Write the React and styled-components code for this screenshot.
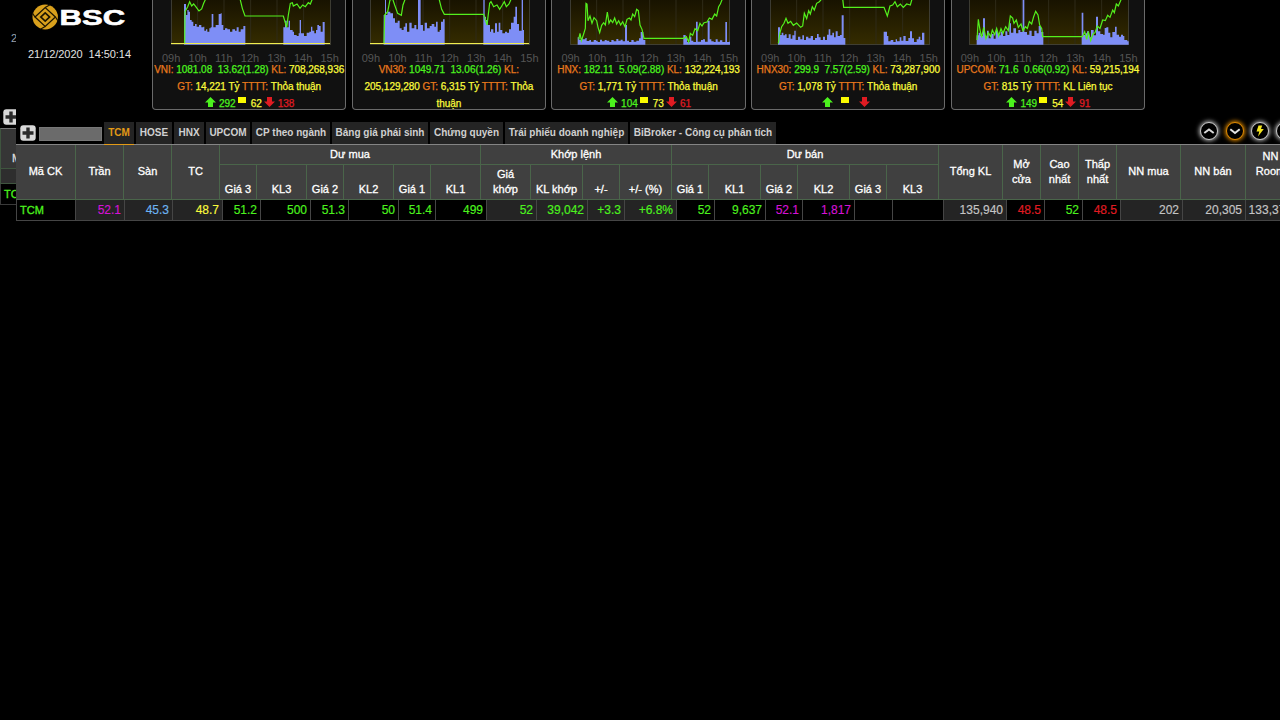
import React from 'react';
import styled, { createGlobalStyle } from 'styled-components';

const GREEN = '#4cf21e';
const YELLOW = '#fbfb3c';
const ORANGE = '#e8791c';
const RED = '#e01b22';
const PURPLE = '#d512d5';
const BLUE = '#6db4f2';
const GREY = '#c4c4c4';

// vol: [x, top] steps of the volume area, price: points of the index line
const markets = [
    {
        lines: [
            [['VNI: ', 'o'], ['1081.08  13.62(1.28)', 'g'], [' KL: ', 'o'], ['708,268,936', 'y']],
            [['GT: ', 'o'], ['14,221 Tỷ', 'y'], [' TTTT: ', 'o'], ['Thỏa thuận', 'y']],
        ],
        counts: ['292', '62', '138'],
        base: true,
        vol: [
            '39:12 45:45 49:30 53:35 57:60 62:65 67:78 72:72 77:80 84:75 91:82 97:80 100:92 105:88 109:95 115:85 119:82 122:42 127:82 134:75 143:42 149:40 152:75 157:90 162:85 169:88 177:95 184:88 192:92 197:82 203:95 209:88 217:78 223',
            '337:82 342:62 347:82 353:62 357:90 365:95 369:105 377:108 383:100 386:60 390:100 399:108 407:98 415:95 420:80 424:92 430:100 435:90 439:75 444:78 449:95 455:66 461',
        ],
        price: '41,130 42,35 50,20 56,5 62,18 68,12 76,22 84,33 92,27 98,10 104,-3 207,-4 214,25 222,48 337,48 347,82 352,45 358,10 364,8 367,18 378,12 387,25 395,15 403,20 412,8 418,12 424,-3',
    },
    {
        lines: [
            [['VN30: ', 'o'], ['1049.71  13.06(1.26)', 'g'], [' KL:', 'o']],
            [['205,129,280', 'y'], [' GT: ', 'o'], ['6,315 Tỷ', 'y'], [' TTTT: ', 'o'], ['Thỏa', 'y']],
            [['thuận', 'y']],
        ],
        base: true,
        vol: [
            '41:45 45:-5 48:45 52:35 61:40 69:55 75:68 83:62 89:85 95:90 101:80 106:70 111:95 118:68 125:85 133:75 139:88 144:-5 152:75 159:92 164:68 171:85 179:78 185:72 193:80 198:65 203:95 209:90 213:65 219:58 224',
            '340:-5 344:50 348:60 353:75 360:95 363:88 370:98 375:70 381:95 386:68 391:90 397:100 405:95 411:98 417:88 423:68 431:50 436:20 441:72 447:92 455:-5 459:90 462',
        ],
        price: '42,130 44,45 53,35 60,0 68,-3 74,15 83,40 94,46 99,15 106,-4 207,-4 215,28 223,43 341,43 351,75 359,10 363,5 371,20 381,15 389,28 397,15 403,5 409,20 417,12 424,-4',
    },
    {
        lines: [
            [['HNX: ', 'o'], ['182.11  5.09(2.88)', 'g'], [' KL: ', 'o'], ['132,224,193', 'y']],
            [['GT: ', 'o'], ['1,771 Tỷ', 'y'], [' TTTT: ', 'o'], ['Thỏa thuận', 'y']],
        ],
        counts: ['104', '73', '61'],
        vol: [
            '23:112 28:120 34:115 38:118 46:114 50:123 58:120 63:125 71:120 78:122 83:126 90:119 96:124 104:120 110:122 118:126 124:120 131:124 139:117 145:122 152:119 158:124 165:75 171:122 177:126 184:120 191:125 199:122 207:115 212:96 220:120 226',
            '340:105 347:112 351:126 359:110 364:122 370:126 378:65 383:125 393:120 399:118 405:125 413:62 419:118 424:124 431:126 437:118 443:125 450:121 457:126 466:66 471:126 479:122 482',
        ],
        price: '26,118 30,100 34,122 40,105 46,85 48,10 51,12 54,62 60,48 66,70 72,53 80,62 84,82 89,98 95,76 101,68 106,75 112,36 117,70 122,60 128,68 134,54 140,72 146,62 152,75 158,65 165,80 171,58 178,54 183,60 188,42 194,50 200,28 205,32 210,75 216,88 222,115 341,115 349,110 356,126 361,100 368,106 375,86 383,92 390,70 396,78 402,68 411,66 418,54 426,58 434,42 440,48 446,20 451,12 457,-3',
    },
    {
        lines: [
            [['HNX30: ', 'o'], ['299.9  7.57(2.59)', 'g'], [' KL: ', 'o'], ['73,287,900', 'y']],
            [['GT: ', 'o'], ['1,078 Tỷ', 'y'], [' TTTT: ', 'o'], ['Thỏa thuận', 'y']],
        ],
        counts: ['', '', ''],
        vol: [
            '24:82 30:105 35:98 40:106 45:103 50:114 56:103 62:116 67:106 73:92 77:120 84:110 91:118 97:106 102:120 108:110 115:115 122:108 129:120 135:114 141:102 146:112 152:120 159:110 165:120 171:104 176:88 181:106 187:98 192:112 197:94 203:108 210:105 215:46 221:114 226',
            '341:95 351:108 355:124 362:120 370:126 377:118 381:124 389:112 394:122 400:108 407:123 415:114 420:94 426:115 432:126 440:118 446:110 451:120 456:98 463',
        ],
        price: '25,130 30,98 35,80 42,70 48,55 54,70 62,64 70,76 80,69 92,82 98,78 103,40 110,56 116,32 121,42 127,20 133,30 140,10 148,5 156,-4 218,-4 221,22 342,22 352,48 360,18 368,15 375,5 382,20 391,12 400,22 410,12 421,15 426,-3',
    },
    {
        lines: [
            [['UPCOM: ', 'o'], ['71.6  0.66(0.92)', 'g'], [' KL: ', 'o'], ['59,215,194', 'y']],
            [['GT: ', 'o'], ['815 Tỷ', 'y'], [' TTTT: ', 'o'], ['KL Liên tục', 'y']],
        ],
        counts: ['149', '54', '91'],
        vol: [
            '23:106 29:98 35:108 42:55 48:112 54:92 59:115 66:102 74:116 80:92 87:106 95:95 102:108 109:94 115:105 121:70 126:98 133:85 141:100 148:90 154:96 161:-5 166:96 174:104 181:92 188:108 196:92 203:100 209:78 216:96 223',
            '338:38 343:105 349:100 354:94 360:112 366:90 374:106 381:50 387:94 394:102 402:104 407:84 412:82 418:98 424:112 430:96 438:80 443:104 450:110 456:104 462:108 466:120 475:124 479',
        ],
        price: '24,120 28,58 33,90 38,112 44,82 51,116 58,98 65,110 70,90 77,104 83,85 89,108 96,86 102,100 110,80 118,92 124,48 131,54 135,70 142,60 148,82 156,72 162,92 169,80 175,85 181,65 188,72 194,50 200,34 207,45 212,75 218,85 221,110 340,110 347,95 353,118 358,95 365,122 372,102 378,98 385,78 393,85 401,60 409,62 416,46 423,52 431,30 436,38 442,12 448,18 457,-3',
    },
];

const hours = ['09h', '10h', '11h', '12h', '13h', '14h', '15h'];

const tabs = [
    ['TCM', 30], ['HOSE', 36], ['HNX', 30], ['UPCOM', 44], ['CP theo ngành', 78],
    ['Bảng giá phái sinh', 96], ['Chứng quyền', 73], ['Trái phiếu doanh nghiệp', 123],
    ['BiBroker - Công cụ phân tích', 146],
];

// label, columns spanned, kind: full height / group title
const topHeads = [
    ['Mã CK', 1, 'full'], ['Trần', 1, 'full'], ['Sàn', 1, 'full'], ['TC', 1, 'full'],
    ['Dư mua', 6, 'group'], ['Khớp lệnh', 4, 'group'], ['Dư bán', 6, 'group'],
    ['Tổng KL', 1, 'full'], ['Mở cửa', 1, 'full'], ['Cao nhất', 1, 'full'], ['Thấp nhất', 1, 'full'],
    ['NN mua', 1, 'full'], ['NN bán', 1, 'full'], ['NN Room', 1, 'top'],
];

const subHeads = [
    'Giá 3', 'KL3', 'Giá 2', 'KL2', 'Giá 1', 'KL1', 'Giá khớp', 'KL khớp', '+/-', '+/- (%)',
    'Giá 1', 'KL1', 'Giá 2', 'KL2', 'Giá 3', 'KL3',
];

// value, colour, lighter background
const cells = [
    ['52.1', PURPLE, 1], ['45.3', BLUE, 1], ['48.7', YELLOW, 1],
    ['51.2', GREEN], ['500', GREEN], ['51.3', GREEN], ['50', GREEN], ['51.4', GREEN], ['499', GREEN],
    ['52', GREEN, 1], ['39,042', GREEN, 1], ['+3.3', GREEN, 1], ['+6.8%', GREEN, 1],
    ['52', GREEN], ['9,637', GREEN], ['52.1', PURPLE], ['1,817', PURPLE], ['', GREEN], ['', GREEN],
    ['135,940', GREY, 1], ['48.5', RED], ['52', GREEN], ['48.5', RED],
    ['202', GREY, 1], ['20,305', GREY, 1], ['133,370', GREY, 1],
];

const areaPath = (steps) => {
    const parts = steps.split(' ');
    let d = '';
    parts.forEach((part, i) => {
        const [x, y] = part.split(':');
        if (i === 0) d += `M${x} 134V${y}`;
        else if (y === undefined) d += `H${x}V134Z`;
        else d += `H${x}V${y}`;
    });
    return d;
};

function Logo() {
    return (
        <svg width="96" height="28" viewBox="0 0 96 28">
            <ellipse cx="13.2" cy="13" rx="12.7" ry="12.4" fill="#d9a01c" />
            <path d="M3 13L13.2 3.6L23.4 13L13.2 22.4Z" fill="none" stroke="#1c1400" strokeWidth="1.3" />
            <path d="M13.2 3.6L18 0.8M23.4 13L26 17M13.2 22.4L8.4 25.2M3 13L0.4 9" stroke="#1c1400" strokeWidth="1.2" />
            <path d="M7.6 13L13.2 7.8L18.8 13L13.2 18.2Z" fill="#1c1400" />
            <path d="M10 13L13.2 10L16.4 13L13.2 16Z" fill="#d9a01c" />
            <text
                transform="translate(27.5 21.2) scale(1.4 1)"
                fontFamily="Liberation Sans, Arial, sans-serif"
                fontSize="22.2"
                fontWeight="700"
                fill="#fff"
                stroke="#fff"
                strokeWidth="0.6"
            >
                BSC
            </text>
        </svg>
    );
}

function PlusIcon() {
    return (
        <svg width="16" height="16" viewBox="0 0 16 16">
            <rect x="0.3" y="0.3" width="15.4" height="15.4" rx="3" fill="#d9d9d9" />
            <path d="M8 2.5V13.5M2.5 8H13.5" stroke="#2b2b2b" strokeWidth="3.4" />
        </svg>
    );
}

function Arrow({ down }) {
    return (
        <svg width="11" height="10" viewBox="0 0 11 10">
            <path
                d={down ? 'M3 0H8V4.5H11L5.5 10L0 4.5H3Z' : 'M3 10H8V5.5H11L5.5 0L0 5.5H3Z'}
                fill={down ? RED : GREEN}
            />
        </svg>
    );
}

function Market({ data }) {
    return (
        <Card>
            <Plot viewBox="0 0 480 135">
                <defs>
                    <linearGradient id="plotBg" x1="0" y1="0" x2="0" y2="1">
                        <stop offset="0" stopColor="#181300" />
                        <stop offset="1" stopColor="#352c00" />
                    </linearGradient>
                </defs>
                <rect width="480" height="135" fill="url(#plotBg)" />
                <path d="M80 0V135M159 0V135M239 0V135M318 0V135M398 0V135" stroke="#2f2b18" strokeWidth="3" />
                <path d="M1 0V134H479V0" fill="none" stroke="#43433c" strokeWidth="3" />
                {data.vol.map((v) => <path key={v} d={areaPath(v)} fill="#7e8ef6" />)}
                {data.base && <path d="M0 130.5H477" stroke="#f1ee50" strokeWidth="3.6" />}
                <polyline points={data.price} fill="none" stroke="#54f01d" strokeWidth="3.6" />
            </Plot>
            <Hours>
                {hours.map((h) => <span key={h}>{h}</span>)}
            </Hours>
            {data.lines.map((line, i) => (
                <InfoLine key={i}>
                    {line.map(([text, tone], j) => <Tone key={j} $tone={tone}>{text}</Tone>)}
                </InfoLine>
            ))}
            {data.counts && (
                <Counts>
                    <Arrow />
                    <Count $color={GREEN}>{data.counts[0]}</Count>
                    <Flat />
                    <Count $color={YELLOW} $wide>{data.counts[1]}</Count>
                    <Arrow down />
                    <Count $color={RED}>{data.counts[2]}</Count>
                </Counts>
            )}
        </Card>
    );
}

function App() {
    return (
        <>
            <GlobalStyle />
            <Page>
                <Behind>
                    <BehindDate>2</BehindDate>
                    <BehindPlus><PlusIcon /></BehindPlus>
                    <BehindHead>M</BehindHead>
                    <BehindFoot />
                    <BehindCode>TC</BehindCode>
                </Behind>
                <Main>
                    <Header>
                        <Brand>
                            <Logo />
                            <Clock>21/12/2020  14:50:14</Clock>
                        </Brand>
                        {markets.map((m, i) => <Market key={i} data={m} />)}
                    </Header>
                    <Toolbar>
                        <PlusIcon />
                        <Search />
                        <Tabs>
                            {tabs.map(([label, width], i) => (
                                <Tab key={label} $width={width} $active={i === 0}>{label}</Tab>
                            ))}
                        </Tabs>
                        <Actions>
                            <RoundButton>
                                <svg width="12" height="12" viewBox="0 0 12 12"><path d="M1.3 8L6 4.4L10.7 8" fill="none" stroke="#d8d8d8" strokeWidth="2" /></svg>
                            </RoundButton>
                            <RoundButton $glow="#e08a00">
                                <svg width="12" height="12" viewBox="0 0 12 12"><path d="M1.3 4.3L6 8L10.7 4.3" fill="none" stroke="#e4e4e4" strokeWidth="2" /></svg>
                            </RoundButton>
                            <RoundButton>
                                <svg width="12" height="12" viewBox="0 0 12 12"><path d="M4.5 0.5H8.2L7 4H9.8L4 11.5L5.3 6.5H2.5Z" fill="#f3e51e" /></svg>
                            </RoundButton>
                            <RoundButton>
                                <svg width="12" height="12" viewBox="0 0 12 12"><path d="M1 6H11M6 1V11" stroke="#d8d8d8" strokeWidth="2" /></svg>
                            </RoundButton>
                        </Actions>
                    </Toolbar>
                    <HeadGrid>
                        {topHeads.map(([label, span, kind]) => (
                            <Head key={label} $span={span} $kind={kind}><span>{label}</span></Head>
                        ))}
                        {subHeads.map((label, i) => (
                            <SubHead key={i} $start={i + 5} $narrow={label === 'Giá khớp'}>{label}</SubHead>
                        ))}
                    </HeadGrid>
                    <Row>
                        <Code>TCM</Code>
                        {cells.map(([value, color, light], i) => (
                            <Cell key={i} $color={color} $light={light}>{value}</Cell>
                        ))}
                    </Row>
                </Main>
            </Page>
        </>
    );
}

const GlobalStyle = createGlobalStyle`
    * {
        box-sizing: border-box;
    }
    body {
        margin: 0;
        background: #000;
        overflow: hidden;
        font-family: "Liberation Sans", Arial, sans-serif;
    }
    svg {
        display: block;
        flex: none;
    }
`;

const Page = styled.div`
    display: flex;
    width: 1280px;
    height: 720px;
    overflow: hidden;
    background: #000;
`;

const Behind = styled.div`
    width: 16px;
    flex: none;
    overflow: hidden;
    white-space: nowrap;
`;

const BehindDate = styled.div`
    margin-top: 32px;
    padding-left: 11px;
    height: 12px;
    line-height: 12px;
    font-size: 11px;
    color: #9aa0ac;
`;

const BehindPlus = styled.div`
    padding: 65px 0 3px 3px;
`;

const BehindHead = styled.div`
    height: 40px;
    padding: 21px 0 0 11px;
    border-top: 1px solid #777;
    border-left: 1px solid #3f553f;
    background: #363636;
    font-size: 11px;
    line-height: 17px;
    color: #ddd;
    -webkit-text-stroke: 0.3px;
`;

const BehindFoot = styled.div`
    height: 16px;
    border: 1px solid #3f553f;
    border-right: none;
    background: #2e2e2e;
`;

const BehindCode = styled.div`
    height: 21px;
    padding-left: 3px;
    border-bottom: 1px solid #3a3a3a;
    border-left: 1px solid #3a3a3a;
    font-size: 11px;
    line-height: 20px;
    color: ${GREEN};
    -webkit-text-stroke: 0.3px;
`;

const Main = styled.div`
    width: 1264px;
    flex: none;
    overflow: hidden;
    background: #000;
`;

const Header = styled.div`
    display: flex;
    height: 122px;
`;

const Brand = styled.div`
    width: 136px;
    flex: none;
    padding: 4px 0 0 16px;
`;

const Clock = styled.div`
    margin: 16px 0 0 -4px;
    font-size: 11px;
    line-height: 13px;
    letter-spacing: -0.05px;
    white-space: pre;
    color: #e2e2e2;
`;

const Card = styled.div`
    width: 194.4px;
    height: 110px;
    flex: none;
    margin-right: 5.3px;
    border: 1px solid #6a6a6a;
    border-top: none;
    border-radius: 0 0 4px 4px;
    background: #111;
`;

const Plot = styled.svg`
    width: 160px;
    height: 45px;
    margin-left: 17.5px;
`;

const Hours = styled.div`
    display: flex;
    justify-content: space-between;
    margin: 6px 6.5px 0 9px;
    height: 10px;
    font-size: 11px;
    line-height: 14px;
    color: #555;
`;

const InfoLine = styled.div`
    display: flex;
    justify-content: center;
    height: 17px;
    font-size: 10px;
    line-height: 17px;
    white-space: pre;
    letter-spacing: -0.03px;
    -webkit-text-stroke: 0.25px;
`;

const Tone = styled.span`
    color: ${({ $tone }) => ({ o: ORANGE, g: GREEN, y: YELLOW }[$tone])};
`;

const Counts = styled.div`
    display: flex;
    justify-content: center;
    height: 14px;
    padding: 2px 0 0 3px;
`;

const Count = styled.span`
    min-width: 3px;
    margin: 0 2px 0 ${({ $wide }) => ($wide ? 5 : 3)}px;
    font-size: 10px;
    line-height: 14px;
    -webkit-text-stroke: 0.25px;
    color: ${({ $color }) => $color};
`;

const Flat = styled.span`
    width: 8px;
    height: 6px;
    background: #fbfb00;
`;

const Toolbar = styled.div`
    display: flex;
    height: 22px;
    padding-left: 4px;
    > svg {
        margin-top: 3px;
    }
`;

const Search = styled.div`
    width: 63px;
    flex: none;
    height: 14px;
    margin: 5px 2px 0 3px;
    border: 1px solid #777;
    background: #6b6b6b;
`;

const Tabs = styled.div`
    display: flex;
    flex: none;
    gap: 2px;
`;

const Tab = styled.div`
    width: ${({ $width }) => $width}px;
    height: ${({ $active }) => ($active ? 23 : 22)}px;
    border-bottom: ${({ $active }) => ($active ? '1px solid #e39a16' : 'none')};
    background: #242424;
    color: ${({ $active }) => ($active ? '#e39a16' : '#d0d0d0')};
    font-size: 10px;
    font-weight: 700;
    line-height: 21px;
    text-align: center;
    white-space: nowrap;
    position: relative;
    z-index: 1;
`;

const Actions = styled.div`
    display: flex;
    flex: none;
    gap: 7px;
    margin-left: 424px;
`;

const RoundButton = styled.div`
    display: flex;
    align-items: center;
    justify-content: center;
    flex: none;
    width: 18px;
    height: 18px;
    border: 1px solid ${({ $glow }) => $glow || '#c8c8c8'};
    border-radius: 50%;
    background: #000;
    box-shadow: 0 0 4px 1px ${({ $glow }) => $glow || '#b4b4b4'};
    &:nth-child(2) {
        margin-left: 1px;
    }
`;

const HeadGrid = styled.div`
    display: grid;
    grid-template-columns:
        60px 48px 48px 48px 37px 50px 37px 50px 37px 50px 50px 52px 37px 52px
        37px 52px 37px 52px 37px 52px 64px 38px 38px 38px 64px 65px 50px;
    grid-template-rows: 20px 35px;
    width: 1330px;
    border-top: 1px solid #858585;
    background: #404040;
    color: #fff;
    font-size: 11px;
    line-height: 15px;
    text-align: center;
    -webkit-text-stroke: 0.3px;
`;

const Head = styled.div`
    display: flex;
    align-items: ${({ $kind }) => ($kind === 'top' ? 'flex-start' : 'center')};
    justify-content: center;
    grid-column-end: span ${({ $span }) => $span};
    grid-row: ${({ $kind }) => ($kind === 'group' ? '1' : '1 / span 2')};
    padding: ${({ $kind }) => ($kind === 'top' ? '4px 8px 0' : $kind === 'group' ? '0' : '0 3px 1px')};
    border-right: 1px solid #4a654a;
    border-bottom: 1px solid #4a654a;
`;

const SubHead = styled.div`
    display: flex;
    align-items: flex-end;
    justify-content: center;
    grid-row: 2;
    grid-column: ${({ $start }) => $start};
    padding: 0 ${({ $narrow }) => ($narrow ? 8 : 0)}px 2px;
    border-right: 1px solid #4a654a;
    border-bottom: 1px solid #4a654a;
`;

const Row = styled.div`
    display: grid;
    grid-template-columns:
        60px 49px 48px 50px 38px 50px 38px 50px 37px 51px 50px 51px 37px 52px
        38px 51px 37px 52px 38px 51px 63px 38px 38px 38px 62px 63px 50px;
    width: 1330px;
    height: 21px;
    font-size: 12px;
    line-height: 20px;
    -webkit-text-stroke: 0.15px;
`;

const Cell = styled.div`
    padding-right: 3px;
    border-right: 1px solid #454545;
    border-bottom: 1px solid #454545;
    background: ${({ $light }) => ($light ? '#242424' : '#000')};
    color: ${({ $color }) => $color};
    text-align: right;
`;

const Code = styled(Cell)`
    padding-left: 3px;
    border-left: 1px solid #454545;
    color: ${GREEN};
    font-size: 11px;
    text-align: left;
    -webkit-text-stroke: 0.3px;
`;

export default App;
